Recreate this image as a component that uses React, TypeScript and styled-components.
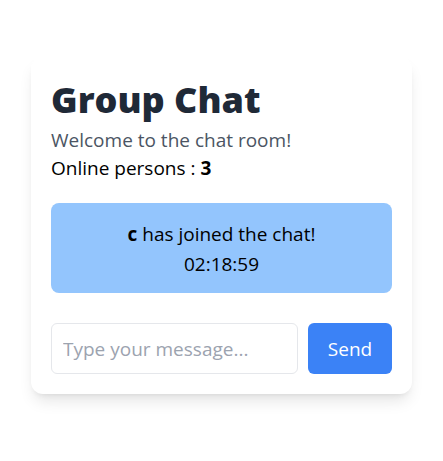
import styled, { createGlobalStyle } from 'styled-components';

const Global = createGlobalStyle`
  html, body { margin: 0; padding: 0; }
  body {
    font-family: "Open Sans", "Noto Sans", sans-serif;
    background: #ffffff;
  }
  * { box-sizing: border-box; }
`;

export default function App() {
  return (
    <>
      <Global />
      <Page>
        <Card>
          <Title>Group Chat</Title>
          <Subtitle>Welcome to the chat room!</Subtitle>
          <Online>Online persons : <b>3</b></Online>
          <Messages>
            <Notice>
              <Line><b>c</b> has joined the chat!</Line>
              <Line $time>02:18:59</Line>
            </Notice>
          </Messages>
          <Composer>
            <MessageInput placeholder="Type your message..." />
            <SendButton>Send</SendButton>
          </Composer>
        </Card>
      </Page>
    </>
  );
}

const Page = styled.div`
  min-height: 100vh;
  padding-bottom: 11px;
  display: flex;
  align-items: center;
  justify-content: center;
`;

const Card = styled.div`
  width: 381px;
  background: #ffffff;
  border-radius: 12px;
  padding: 20px;
  box-shadow: 0 10px 15px -3px rgba(0, 0, 0, 0.1), 0 4px 6px -4px rgba(0, 0, 0, 0.1);
  display: flex;
  flex-direction: column;
`;

const Title = styled.h1`
  margin: 0 0 2px;
  font-size: 36px;
  line-height: 48px;
  font-weight: 800;
  color: #1f2937;
`;

const Subtitle = styled.p`
  margin: 0;
  font-size: 19px;
  line-height: 28px;
  color: #4b5563;
`;

const Online = styled.p`
  margin: 0;
  font-size: 19px;
  line-height: 28px;
  color: #000000;
`;

const Messages = styled.div`
  margin-top: 21px;
  display: flex;
  flex-direction: column;
  gap: 8px;
`;

const Notice = styled.div`
  background: #93c5fd;
  border-radius: 8px;
  padding: 17px 16px 15px;
  text-align: center;
  color: #000000;
`;

const Line = styled.div<{ $time?: boolean }>`
  font-size: 19px;
  line-height: 28px;
  margin-top: ${(p) => (p.$time ? '2px' : '0')};
`;

const Composer = styled.div`
  margin-top: 30px;
  display: flex;
  gap: 10px;
`;

const MessageInput = styled.input`
  flex: 1;
  min-width: 0;
  height: 51px;
  padding: 0 11px;
  border: 1px solid #e5e7eb;
  border-radius: 6px;
  font-family: inherit;
  font-size: 19px;
  color: #111827;
  outline: none;
  &::placeholder { color: #9ca3af; }
`;

const SendButton = styled.button`
  width: 84px;
  height: 51px;
  border: none;
  border-radius: 6px;
  background: #3b82f6;
  color: #ffffff;
  font-family: inherit;
  font-size: 19px;
  cursor: pointer;
`;
